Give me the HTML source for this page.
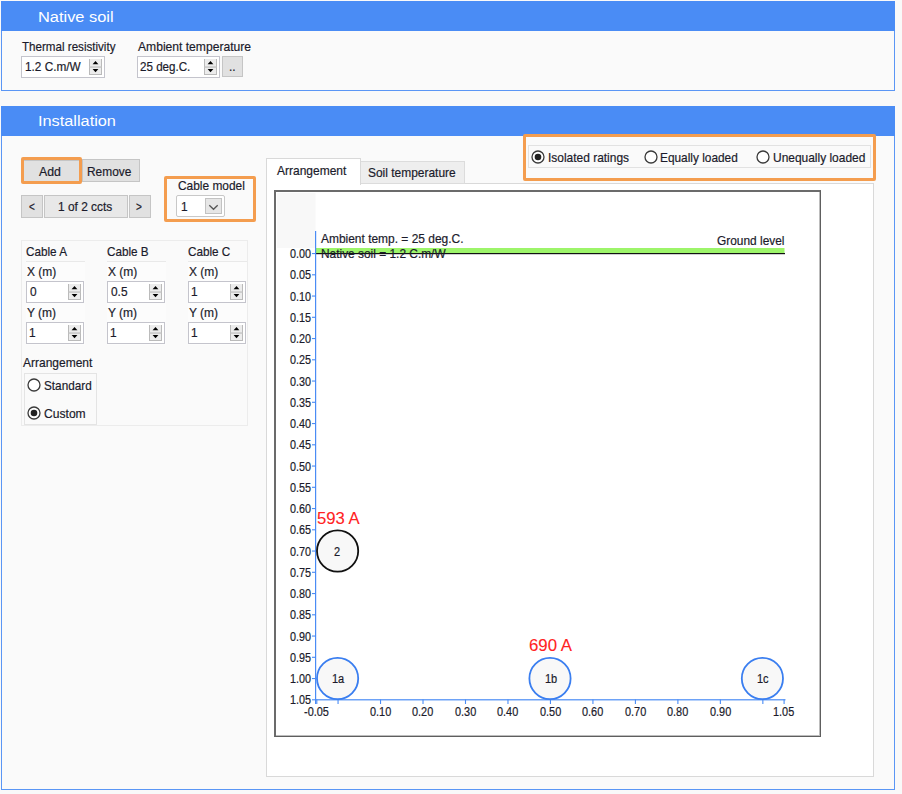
<!DOCTYPE html>
<html><head><meta charset="utf-8">
<style>
*{box-sizing:border-box;margin:0;padding:0}
html,body{width:902px;height:794px;overflow:hidden;background:#f9f9f9;font-family:"Liberation Sans", sans-serif;font-size:13px;color:#1b1b2b}
.a{position:absolute}
.hdr{position:absolute;background:#4a8cf5}
.body{position:absolute;background:#fafafa;border:1px solid #5a96f5;border-top:none}
.tb{position:absolute;background:#fff;border:1px solid #c4c4cc}
.btn{position:absolute;background:#e1e1e1;border:1px solid #c8c8c8}
.orange{position:absolute;border:3px solid #f49d4f;border-radius:2px}
.t{position:absolute;white-space:nowrap;line-height:1;transform-origin:0 0;-webkit-text-stroke:0.2px currentColor}
</style></head><body>
<div class="hdr" style="left:1px;top:1px;width:894px;height:30px"></div>
<div class="t" style="left:37.96px;top:9px;font-size:15.5px;color:#fff;transform:scaleX(1.0581);-webkit-text-stroke:0">Native soil</div>
<div class="body" style="left:1px;top:31px;width:894px;height:60px"></div>
<div class="t" style="left:22.24px;top:40px;font-size:13px;color:#1b1b2b;transform:scaleX(0.8923)">Thermal resistivity</div>
<div class="tb" style="left:21px;top:56px;width:84px;height:22px"></div>
<div class="t" style="left:24.60px;top:60px;font-size:13px;color:#1b1b2b;transform:scaleX(0.9077)">1.2 C.m/W</div>
<svg class="a" style="left:89px;top:59px" width="13" height="16"><rect width="13" height="16" fill="#ececec"/><rect width="1" height="16" fill="#bababa"/><rect x="12" width="1" height="16" fill="#bababa"/><rect y="15" width="13" height="1" fill="#bababa"/><rect y="7.4" width="13" height="1.3" fill="#c0c0c0"/><path d="M3.6 5.2 L6.5 2 L9.4 5.2Z" fill="#000"/><path d="M3.6 9.9 L6.5 13.2 L9.4 9.9Z" fill="#000"/></svg>
<div class="t" style="left:138.18px;top:40px;font-size:13px;color:#1b1b2b;transform:scaleX(0.9308)">Ambient temperature</div>
<div class="tb" style="left:137px;top:56px;width:83px;height:22px"></div>
<div class="t" style="left:139.92px;top:60px;font-size:13px;color:#1b1b2b;transform:scaleX(0.8923)">25 deg.C.</div>
<svg class="a" style="left:204px;top:59px" width="13" height="16"><rect width="13" height="16" fill="#ececec"/><rect width="1" height="16" fill="#bababa"/><rect x="12" width="1" height="16" fill="#bababa"/><rect y="15" width="13" height="1" fill="#bababa"/><rect y="7.4" width="13" height="1.3" fill="#c0c0c0"/><path d="M3.6 5.2 L6.5 2 L9.4 5.2Z" fill="#000"/><path d="M3.6 9.9 L6.5 13.2 L9.4 9.9Z" fill="#000"/></svg>
<div class="btn" style="left:222px;top:56px;width:21px;height:21px;background:#e1e1e1;border-color:#c5c5c5"></div>
<div class="t" style="left:229.41px;top:60px;font-size:13px;color:#1b1b2b;transform:scaleX(0.9154)">..</div>
<div class="hdr" style="left:1px;top:106px;width:894px;height:30px"></div>
<div class="t" style="left:38.00px;top:113px;font-size:15.5px;color:#fff;transform:scaleX(1.0516);-webkit-text-stroke:0">Installation</div>
<div class="body" style="left:1px;top:136px;width:894px;height:654px"></div>
<div class="btn" style="left:82px;top:159px;width:58px;height:23px;background:#e1e1e1;border-color:#c5c5c5"></div>
<div class="t" style="left:87.32px;top:165px;font-size:13px;color:#1b1b2b;transform:scaleX(0.9154)">Remove</div>
<div class="btn" style="left:23px;top:160px;width:57px;height:22px;background:#e1e1e1;border-color:#c5c5c5"></div>
<div class="orange" style="left:21px;top:157px;width:61px;height:27px"></div>
<div class="t" style="left:38.98px;top:165px;font-size:13px;color:#1b1b2b;transform:scaleX(0.9462)">Add</div>
<div class="btn" style="left:21px;top:195px;width:22px;height:23px;background:#e1e1e1;border-color:#c5c5c5"></div>
<div class="t" style="left:29.00px;top:201px;font-size:12px;color:#1b1b2b;transform:scaleX(0.8333)">&lt;</div>
<div class="btn" style="left:44px;top:195px;width:84px;height:23px;background:#e8e8e8;border-color:#c5c5c5"></div>
<div class="t" style="left:58.30px;top:200px;font-size:13px;color:#1b1b2b;transform:scaleX(0.9154)">1 of 2 ccts</div>
<div class="btn" style="left:129px;top:195px;width:22px;height:23px;background:#e1e1e1;border-color:#c5c5c5"></div>
<div class="t" style="left:136.00px;top:201px;font-size:12px;color:#1b1b2b;transform:scaleX(0.8333)">&gt;</div>
<div class="orange" style="left:164px;top:176px;width:92px;height:46px"></div>
<div class="t" style="left:177.71px;top:179px;font-size:13px;color:#1b1b2b;transform:scaleX(0.9154)">Cable model</div>
<div class="tb" style="left:176px;top:195px;width:49px;height:22px;border-radius:2px;border-color:#c8c8c8"></div>
<div class="t" style="left:180.60px;top:200px;font-size:13px;color:#1b1b2b;transform:scaleX(0.9154)">1</div>
<div class="a" style="left:205px;top:198px;width:17px;height:16px;background:#e6e6e6;border:1px solid #c2c2c2"></div>
<svg class="a" style="left:205px;top:198px" width="17" height="16"><path d="M4.3 7.2 L8.5 11.3 L12.7 7.2" fill="none" stroke="#555" stroke-width="1.3"/></svg>
<div class="orange" style="left:523px;top:134px;width:353px;height:47px"></div>
<div class="a" style="left:528px;top:145px;width:343px;height:23px;border:1px solid #e2e2e2"></div>
<svg class="a" style="left:530.8px;top:149.5px" width="14" height="14"><circle cx="7" cy="7" r="6" fill="#fff" stroke="#3a3a3a" stroke-width="1.3"/><circle cx="7" cy="7" r="3.3" fill="#222"/></svg>
<div class="t" style="left:547.50px;top:151px;font-size:13px;color:#1b1b2b;transform:scaleX(0.9192)">Isolated ratings</div>
<svg class="a" style="left:643.6px;top:149.5px" width="14" height="14"><circle cx="7" cy="7" r="6" fill="#fff" stroke="#3a3a3a" stroke-width="1.3"/></svg>
<div class="t" style="left:660.03px;top:151px;font-size:13px;color:#1b1b2b;transform:scaleX(0.9115)">Equally loaded</div>
<svg class="a" style="left:756.3px;top:149.5px" width="14" height="14"><circle cx="7" cy="7" r="6" fill="#fff" stroke="#3a3a3a" stroke-width="1.3"/></svg>
<div class="t" style="left:773.07px;top:151px;font-size:13px;color:#1b1b2b;transform:scaleX(0.9192)">Unequally loaded</div>
<div class="a" style="left:266px;top:183px;width:608px;height:594px;background:#fff;border:1px solid #d9d9d9"></div>
<div class="a" style="left:360px;top:161px;width:105px;height:23px;background:#eeeeee;border:1px solid #dcdcdc"></div>
<div class="a" style="left:266px;top:158px;width:95px;height:27px;background:#fff;border:1px solid #d9d9d9;border-bottom:none"></div>
<div class="t" style="left:276.58px;top:164px;font-size:13px;color:#1b1b2b;transform:scaleX(0.9231)">Arrangement</div>
<div class="t" style="left:367.95px;top:166px;font-size:13px;color:#1b1b2b;transform:scaleX(0.9192)">Soil temperature</div>
<div class="a" style="left:21px;top:240px;width:227px;height:186px;border:1px solid #ececec"></div>
<div class="t" style="left:25.81px;top:245px;font-size:13px;color:#1b1b2b;transform:scaleX(0.9000)">Cable A</div>
<div class="a" style="left:26px;top:261px;width:59px;height:84px;background:#fcfcfc;border-top:1px solid #e9e9e9"></div>
<div class="t" style="left:26.61px;top:265px;font-size:13px;color:#1b1b2b;transform:scaleX(0.9231)">X (m)</div>
<div class="tb" style="left:26px;top:281px;width:58px;height:22px"></div>
<div class="t" style="left:29.72px;top:285px;font-size:13px;color:#1b1b2b;transform:scaleX(0.9154)">0</div>
<svg class="a" style="left:68px;top:284px" width="13" height="16"><rect width="13" height="16" fill="#ececec"/><rect width="1" height="16" fill="#bababa"/><rect x="12" width="1" height="16" fill="#bababa"/><rect y="15" width="13" height="1" fill="#bababa"/><rect y="7.4" width="13" height="1.3" fill="#c0c0c0"/><path d="M3.6 5.2 L6.5 2 L9.4 5.2Z" fill="#000"/><path d="M3.6 9.9 L6.5 13.2 L9.4 9.9Z" fill="#000"/></svg>
<div class="t" style="left:26.64px;top:306px;font-size:13px;color:#1b1b2b;transform:scaleX(0.9231)">Y (m)</div>
<div class="tb" style="left:26px;top:322px;width:58px;height:22px"></div>
<div class="t" style="left:29.30px;top:326px;font-size:13px;color:#1b1b2b;transform:scaleX(0.9154)">1</div>
<svg class="a" style="left:68px;top:325px" width="13" height="16"><rect width="13" height="16" fill="#ececec"/><rect width="1" height="16" fill="#bababa"/><rect x="12" width="1" height="16" fill="#bababa"/><rect y="15" width="13" height="1" fill="#bababa"/><rect y="7.4" width="13" height="1.3" fill="#c0c0c0"/><path d="M3.6 5.2 L6.5 2 L9.4 5.2Z" fill="#000"/><path d="M3.6 9.9 L6.5 13.2 L9.4 9.9Z" fill="#000"/></svg>
<div class="t" style="left:106.72px;top:245px;font-size:13px;color:#1b1b2b;transform:scaleX(0.9000)">Cable B</div>
<div class="a" style="left:107px;top:261px;width:59px;height:84px;background:#fcfcfc;border-top:1px solid #e9e9e9"></div>
<div class="t" style="left:107.51px;top:265px;font-size:13px;color:#1b1b2b;transform:scaleX(0.9231)">X (m)</div>
<div class="tb" style="left:107px;top:281px;width:58px;height:22px"></div>
<div class="t" style="left:110.62px;top:285px;font-size:13px;color:#1b1b2b;transform:scaleX(0.9154)">0.5</div>
<svg class="a" style="left:149px;top:284px" width="13" height="16"><rect width="13" height="16" fill="#ececec"/><rect width="1" height="16" fill="#bababa"/><rect x="12" width="1" height="16" fill="#bababa"/><rect y="15" width="13" height="1" fill="#bababa"/><rect y="7.4" width="13" height="1.3" fill="#c0c0c0"/><path d="M3.6 5.2 L6.5 2 L9.4 5.2Z" fill="#000"/><path d="M3.6 9.9 L6.5 13.2 L9.4 9.9Z" fill="#000"/></svg>
<div class="t" style="left:107.54px;top:306px;font-size:13px;color:#1b1b2b;transform:scaleX(0.9231)">Y (m)</div>
<div class="tb" style="left:107px;top:322px;width:58px;height:22px"></div>
<div class="t" style="left:110.20px;top:326px;font-size:13px;color:#1b1b2b;transform:scaleX(0.9154)">1</div>
<svg class="a" style="left:149px;top:325px" width="13" height="16"><rect width="13" height="16" fill="#ececec"/><rect width="1" height="16" fill="#bababa"/><rect x="12" width="1" height="16" fill="#bababa"/><rect y="15" width="13" height="1" fill="#bababa"/><rect y="7.4" width="13" height="1.3" fill="#c0c0c0"/><path d="M3.6 5.2 L6.5 2 L9.4 5.2Z" fill="#000"/><path d="M3.6 9.9 L6.5 13.2 L9.4 9.9Z" fill="#000"/></svg>
<div class="t" style="left:187.91px;top:245px;font-size:13px;color:#1b1b2b;transform:scaleX(0.9000)">Cable C</div>
<div class="a" style="left:188px;top:261px;width:59px;height:84px;background:#fcfcfc;border-top:1px solid #e9e9e9"></div>
<div class="t" style="left:188.71px;top:265px;font-size:13px;color:#1b1b2b;transform:scaleX(0.9231)">X (m)</div>
<div class="tb" style="left:188px;top:281px;width:58px;height:22px"></div>
<div class="t" style="left:191.40px;top:285px;font-size:13px;color:#1b1b2b;transform:scaleX(0.9154)">1</div>
<svg class="a" style="left:230px;top:284px" width="13" height="16"><rect width="13" height="16" fill="#ececec"/><rect width="1" height="16" fill="#bababa"/><rect x="12" width="1" height="16" fill="#bababa"/><rect y="15" width="13" height="1" fill="#bababa"/><rect y="7.4" width="13" height="1.3" fill="#c0c0c0"/><path d="M3.6 5.2 L6.5 2 L9.4 5.2Z" fill="#000"/><path d="M3.6 9.9 L6.5 13.2 L9.4 9.9Z" fill="#000"/></svg>
<div class="t" style="left:188.74px;top:306px;font-size:13px;color:#1b1b2b;transform:scaleX(0.9231)">Y (m)</div>
<div class="tb" style="left:188px;top:322px;width:58px;height:22px"></div>
<div class="t" style="left:191.40px;top:326px;font-size:13px;color:#1b1b2b;transform:scaleX(0.9154)">1</div>
<svg class="a" style="left:230px;top:325px" width="13" height="16"><rect width="13" height="16" fill="#ececec"/><rect width="1" height="16" fill="#bababa"/><rect x="12" width="1" height="16" fill="#bababa"/><rect y="15" width="13" height="1" fill="#bababa"/><rect y="7.4" width="13" height="1.3" fill="#c0c0c0"/><path d="M3.6 5.2 L6.5 2 L9.4 5.2Z" fill="#000"/><path d="M3.6 9.9 L6.5 13.2 L9.4 9.9Z" fill="#000"/></svg>
<div class="t" style="left:23.18px;top:356px;font-size:13px;color:#1b1b2b;transform:scaleX(0.9231)">Arrangement</div>
<div class="a" style="left:24px;top:373px;width:73px;height:52px;border:1px solid #e4e4e4"></div>
<svg class="a" style="left:27.299999999999997px;top:377.6px" width="14" height="14"><circle cx="7" cy="7" r="6" fill="#fff" stroke="#3a3a3a" stroke-width="1.3"/></svg>
<div class="t" style="left:43.76px;top:379px;font-size:13px;color:#1b1b2b;transform:scaleX(0.9038)">Standard</div>
<svg class="a" style="left:27.299999999999997px;top:405.5px" width="14" height="14"><circle cx="7" cy="7" r="6" fill="#fff" stroke="#3a3a3a" stroke-width="1.3"/><circle cx="7" cy="7" r="3.3" fill="#222"/></svg>
<div class="t" style="left:43.90px;top:407px;font-size:13px;color:#1b1b2b;transform:scaleX(0.9308)">Custom</div>
<div class="a" style="left:274px;top:190px;width:547px;height:547px;background:#fff;border-style:solid;border-color:#6b6b6b #5e5e5e #5e5e5e #6b6b6b;border-width:2px 1px 1px 2px;box-shadow:inset -1px -1px 0 #bdbdbd"></div>
<svg class="a" style="left:0;top:0" width="902" height="794">
<rect x="277" y="193" width="38.5" height="55" fill="#f8f8f8"/>
<rect x="315.5" y="248" width="469.0" height="5" fill="#9df56a"/>
<rect x="315.5" y="253" width="469.5" height="1.2" fill="#111"/>
<rect x="315" y="231" width="1.2" height="473" fill="#4a8cf5"/>
<rect x="315" y="699.2" width="470.5" height="1.2" fill="#4a8cf5"/>
<rect x="312" y="253.00" width="3.5" height="1.1" fill="#4a8cf5"/>
<rect x="312" y="274.25" width="3.5" height="1.1" fill="#4a8cf5"/>
<rect x="312" y="295.50" width="3.5" height="1.1" fill="#4a8cf5"/>
<rect x="312" y="316.75" width="3.5" height="1.1" fill="#4a8cf5"/>
<rect x="312" y="338.00" width="3.5" height="1.1" fill="#4a8cf5"/>
<rect x="312" y="359.25" width="3.5" height="1.1" fill="#4a8cf5"/>
<rect x="312" y="380.50" width="3.5" height="1.1" fill="#4a8cf5"/>
<rect x="312" y="401.75" width="3.5" height="1.1" fill="#4a8cf5"/>
<rect x="312" y="423.00" width="3.5" height="1.1" fill="#4a8cf5"/>
<rect x="312" y="444.25" width="3.5" height="1.1" fill="#4a8cf5"/>
<rect x="312" y="465.50" width="3.5" height="1.1" fill="#4a8cf5"/>
<rect x="312" y="486.75" width="3.5" height="1.1" fill="#4a8cf5"/>
<rect x="312" y="508.00" width="3.5" height="1.1" fill="#4a8cf5"/>
<rect x="312" y="529.25" width="3.5" height="1.1" fill="#4a8cf5"/>
<rect x="312" y="550.50" width="3.5" height="1.1" fill="#4a8cf5"/>
<rect x="312" y="571.75" width="3.5" height="1.1" fill="#4a8cf5"/>
<rect x="312" y="593.00" width="3.5" height="1.1" fill="#4a8cf5"/>
<rect x="312" y="614.25" width="3.5" height="1.1" fill="#4a8cf5"/>
<rect x="312" y="635.50" width="3.5" height="1.1" fill="#4a8cf5"/>
<rect x="312" y="656.75" width="3.5" height="1.1" fill="#4a8cf5"/>
<rect x="312" y="678.00" width="3.5" height="1.1" fill="#4a8cf5"/>
<rect x="312" y="699.25" width="3.5" height="1.1" fill="#4a8cf5"/>
<rect x="316.26" y="699.5" width="1.1" height="4.5" fill="#4a8cf5"/>
<rect x="337.50" y="699.5" width="1.1" height="4.5" fill="#4a8cf5"/>
<rect x="379.98" y="699.5" width="1.1" height="4.5" fill="#4a8cf5"/>
<rect x="422.46" y="699.5" width="1.1" height="4.5" fill="#4a8cf5"/>
<rect x="464.94" y="699.5" width="1.1" height="4.5" fill="#4a8cf5"/>
<rect x="507.42" y="699.5" width="1.1" height="4.5" fill="#4a8cf5"/>
<rect x="549.90" y="699.5" width="1.1" height="4.5" fill="#4a8cf5"/>
<rect x="592.38" y="699.5" width="1.1" height="4.5" fill="#4a8cf5"/>
<rect x="634.86" y="699.5" width="1.1" height="4.5" fill="#4a8cf5"/>
<rect x="677.34" y="699.5" width="1.1" height="4.5" fill="#4a8cf5"/>
<rect x="719.82" y="699.5" width="1.1" height="4.5" fill="#4a8cf5"/>
<rect x="762.30" y="699.5" width="1.1" height="4.5" fill="#4a8cf5"/>
<rect x="783.54" y="699.5" width="1.1" height="4.5" fill="#4a8cf5"/>
<circle cx="337.60" cy="678.50" r="20.6" fill="#f8f8f8" stroke="#3a7ef0" stroke-width="1.8"/>
<circle cx="550.00" cy="678.50" r="20.6" fill="#f8f8f8" stroke="#3a7ef0" stroke-width="1.8"/>
<circle cx="762.40" cy="678.50" r="20.6" fill="#f8f8f8" stroke="#3a7ef0" stroke-width="1.8"/>
<circle cx="337.60" cy="551.00" r="20.6" fill="#f8f8f8" stroke="#111" stroke-width="1.8"/>
</svg>
<div class="t" style="left:290.39px;top:248px;font-size:12.5px;color:#1b1b2b;transform:scaleX(0.8640)">0.00</div>
<div class="t" style="left:290.44px;top:269px;font-size:12.5px;color:#1b1b2b;transform:scaleX(0.8640)">0.05</div>
<div class="t" style="left:290.39px;top:291px;font-size:12.5px;color:#1b1b2b;transform:scaleX(0.8640)">0.10</div>
<div class="t" style="left:290.44px;top:312px;font-size:12.5px;color:#1b1b2b;transform:scaleX(0.8640)">0.15</div>
<div class="t" style="left:290.39px;top:333px;font-size:12.5px;color:#1b1b2b;transform:scaleX(0.8640)">0.20</div>
<div class="t" style="left:290.44px;top:354px;font-size:12.5px;color:#1b1b2b;transform:scaleX(0.8640)">0.25</div>
<div class="t" style="left:290.39px;top:376px;font-size:12.5px;color:#1b1b2b;transform:scaleX(0.8640)">0.30</div>
<div class="t" style="left:290.44px;top:397px;font-size:12.5px;color:#1b1b2b;transform:scaleX(0.8640)">0.35</div>
<div class="t" style="left:290.39px;top:418px;font-size:12.5px;color:#1b1b2b;transform:scaleX(0.8640)">0.40</div>
<div class="t" style="left:290.44px;top:439px;font-size:12.5px;color:#1b1b2b;transform:scaleX(0.8640)">0.45</div>
<div class="t" style="left:290.39px;top:461px;font-size:12.5px;color:#1b1b2b;transform:scaleX(0.8640)">0.50</div>
<div class="t" style="left:290.44px;top:482px;font-size:12.5px;color:#1b1b2b;transform:scaleX(0.8640)">0.55</div>
<div class="t" style="left:290.39px;top:503px;font-size:12.5px;color:#1b1b2b;transform:scaleX(0.8640)">0.60</div>
<div class="t" style="left:290.44px;top:524px;font-size:12.5px;color:#1b1b2b;transform:scaleX(0.8640)">0.65</div>
<div class="t" style="left:290.39px;top:546px;font-size:12.5px;color:#1b1b2b;transform:scaleX(0.8640)">0.70</div>
<div class="t" style="left:290.44px;top:567px;font-size:12.5px;color:#1b1b2b;transform:scaleX(0.8640)">0.75</div>
<div class="t" style="left:290.39px;top:588px;font-size:12.5px;color:#1b1b2b;transform:scaleX(0.8640)">0.80</div>
<div class="t" style="left:290.44px;top:609px;font-size:12.5px;color:#1b1b2b;transform:scaleX(0.8640)">0.85</div>
<div class="t" style="left:290.39px;top:631px;font-size:12.5px;color:#1b1b2b;transform:scaleX(0.8640)">0.90</div>
<div class="t" style="left:290.44px;top:652px;font-size:12.5px;color:#1b1b2b;transform:scaleX(0.8640)">0.95</div>
<div class="t" style="left:290.39px;top:673px;font-size:12.5px;color:#1b1b2b;transform:scaleX(0.8640)">1.00</div>
<div class="t" style="left:290.44px;top:694px;font-size:12.5px;color:#1b1b2b;transform:scaleX(0.8640)">1.05</div>
<div class="t" style="left:304.32px;top:706px;font-size:12.5px;color:#1b1b2b;transform:scaleX(0.8720)">-0.05</div>
<div class="t" style="left:369.86px;top:706px;font-size:12.5px;color:#1b1b2b;transform:scaleX(0.8720)">0.10</div>
<div class="t" style="left:412.34px;top:706px;font-size:12.5px;color:#1b1b2b;transform:scaleX(0.8720)">0.20</div>
<div class="t" style="left:454.82px;top:706px;font-size:12.5px;color:#1b1b2b;transform:scaleX(0.8720)">0.30</div>
<div class="t" style="left:497.30px;top:706px;font-size:12.5px;color:#1b1b2b;transform:scaleX(0.8720)">0.40</div>
<div class="t" style="left:539.78px;top:706px;font-size:12.5px;color:#1b1b2b;transform:scaleX(0.8720)">0.50</div>
<div class="t" style="left:582.26px;top:706px;font-size:12.5px;color:#1b1b2b;transform:scaleX(0.8720)">0.60</div>
<div class="t" style="left:624.74px;top:706px;font-size:12.5px;color:#1b1b2b;transform:scaleX(0.8720)">0.70</div>
<div class="t" style="left:667.22px;top:706px;font-size:12.5px;color:#1b1b2b;transform:scaleX(0.8720)">0.80</div>
<div class="t" style="left:709.70px;top:706px;font-size:12.5px;color:#1b1b2b;transform:scaleX(0.8720)">0.90</div>
<div class="t" style="left:773.25px;top:706px;font-size:12.5px;color:#1b1b2b;transform:scaleX(0.8720)">1.05</div>
<div class="t" style="left:331.97px;top:673px;font-size:12px;color:#1b1b2b;transform:scaleX(0.9167)">1a</div>
<div class="t" style="left:544.60px;top:673px;font-size:12px;color:#1b1b2b;transform:scaleX(0.9167)">1b</div>
<div class="t" style="left:757.22px;top:673px;font-size:12px;color:#1b1b2b;transform:scaleX(0.9167)">1c</div>
<div class="t" style="left:334.14px;top:546px;font-size:12px;color:#1b1b2b;transform:scaleX(0.9167)">2</div>
<div class="t" style="left:317.13px;top:510px;font-size:16.5px;color:#f22;transform:scaleX(1.0121);-webkit-text-stroke:0.1px currentColor">593 A</div>
<div class="t" style="left:528.96px;top:637px;font-size:16.5px;color:#f22;transform:scaleX(1.0182);-webkit-text-stroke:0.1px currentColor">690 A</div>
<div class="t" style="left:321.18px;top:232px;font-size:13px;color:#1b1b2b;transform:scaleX(0.9192)">Ambient temp. = 25 deg.C.</div>
<div class="t" style="left:320.92px;top:247px;font-size:13px;color:#1b1b2b;transform:scaleX(0.9154)">Native soil = 1.2 C.m/W</div>
<div class="t" style="left:717.21px;top:234px;font-size:13px;color:#1b1b2b;transform:scaleX(0.9154)">Ground level</div>
</body></html>
